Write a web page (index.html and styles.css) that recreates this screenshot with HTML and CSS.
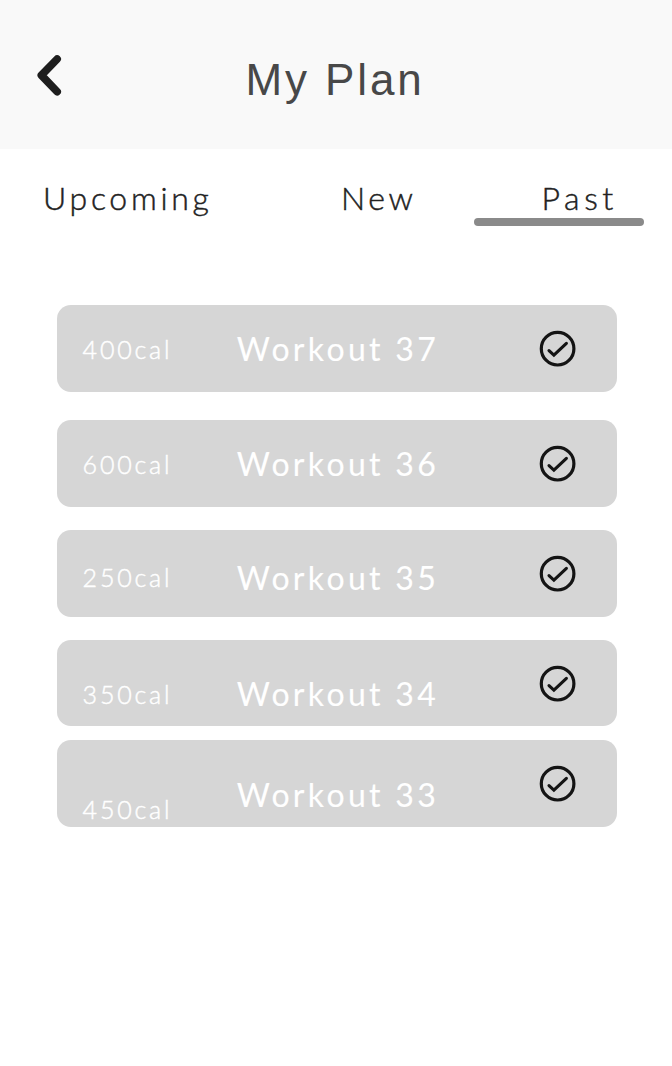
FILE: index.html
```html
<!DOCTYPE html>
<html lang="en">
<head>
<meta charset="utf-8">
<title>My Plan</title>
<link rel="stylesheet" href="styles.css">
</head>
<body>
<svg width="0" height="0" class="sprite">
  <symbol id="check" viewBox="0 0 38 38">
    <circle cx="18.6" cy="18.7" r="16.3" fill="none" stroke="#141414" stroke-width="3.2"/>
    <path d="M10 20.6 L14.9 25.2 L27.4 13.3" fill="none" stroke="#141414" stroke-width="3.1" stroke-linecap="round" stroke-linejoin="miter"/>
  </symbol>
</svg>
<header class="header">
  <svg class="back" viewBox="0 0 28 44" aria-label="Back"><path d="M21.1 6.1 L5.4 22.2 L21.1 38.6" fill="none" stroke="#1e1e1e" stroke-width="7.8" stroke-linecap="round" stroke-linejoin="round"/></svg>
  <h1 class="title">My Plan</h1>
</header>
<nav class="tabs">
  <a class="tab upcoming">Upcoming</a>
  <a class="tab new">New</a>
  <a class="tab past">Past</a>
</nav>
<main class="list">
  <article class="card c37"><span class="cal">400cal</span><h2 class="name">Workout 37</h2><svg class="check"><use href="#check"/></svg></article>
  <article class="card c36"><span class="cal">600cal</span><h2 class="name">Workout 36</h2><svg class="check"><use href="#check"/></svg></article>
  <article class="card c35"><span class="cal">250cal</span><h2 class="name">Workout 35</h2><svg class="check"><use href="#check"/></svg></article>
  <article class="card c34"><span class="cal">350cal</span><h2 class="name">Workout 34</h2><svg class="check"><use href="#check"/></svg></article>
  <article class="card c33"><span class="cal">450cal</span><h2 class="name">Workout 33</h2><svg class="check"><use href="#check"/></svg></article>
</main>
</body>
</html>
```
FILE: styles.css
```css
* { box-sizing: border-box; }
body { margin: 0; background: #fff; font-family: Lato, "Open Sans", sans-serif; }
h1, h2 { margin: 0; }
.sprite { display: block; width: 0; height: 0; }
.header { height: 149px; background: #f9f9f9; display: flex; align-items: flex-start; padding-left: 36px; }
.back { width: 28px; height: 44px; margin-top: 53px; }
.title { margin: 55px 0 0 181.5px; font: 400 44px/50px "Liberation Sans", sans-serif; letter-spacing: 2.9px; color: #484848; white-space: nowrap; }
.tabs { height: 156px; display: flex; padding: 30px 28px 0 43px; }
.tab { font-size: 32px; line-height: 38px; font-weight: 300; letter-spacing: 3.2px; color: #222; -webkit-text-stroke: .45px #222; white-space: nowrap; }
.upcoming { width: 298px; letter-spacing: 3.7px; }
.new { width: 132.5px; letter-spacing: 3.6px; }
.past { width: 170px; padding-left: 68px; letter-spacing: 4.6px; }
.past::after { content: ""; display: block; width: 170px; height: 7.4px; margin: 1.2px 0 0 -68px; border-radius: 4px; background: #8a8a8a; }
.list { padding-left: 57.3px; }
.card { width: 559.4px; height: 86.4px; border-radius: 14px; background: #d6d6d6; display: grid; grid-template-columns: 153px 328.7px 38px; align-items: start; color: #fff; }
.cal { padding-left: 25.3px; margin-top: 29px; font-size: 25px; line-height: 30px; font-weight: 300; letter-spacing: 2.8px; -webkit-text-stroke: .45px #fff; }
.name { padding-left: 26.5px; margin-top: 24.5px; font-size: 32px; line-height: 38px; font-weight: 400; letter-spacing: 3.3px; -webkit-text-stroke: .1px #fff; white-space: nowrap; }
.check { width: 38px; height: 38px; margin-top: 25px; }
.c37 { margin-top: .3px; }
.c36 { margin-top: 28.8px; }
.c35 { margin-top: 23.3px; }
.c34 { margin-top: 23.3px; }
.c33 { margin-top: 14.2px; }
.c35 .cal { margin-top: 32px; }
.c35 .name { margin-top: 29px; }
.c34 .cal { margin-top: 39px; }
.c34 .name { margin-top: 35.5px; }
.c33 .cal { margin-top: 53.5px; }
.c33 .name { margin-top: 35.5px; }
```
